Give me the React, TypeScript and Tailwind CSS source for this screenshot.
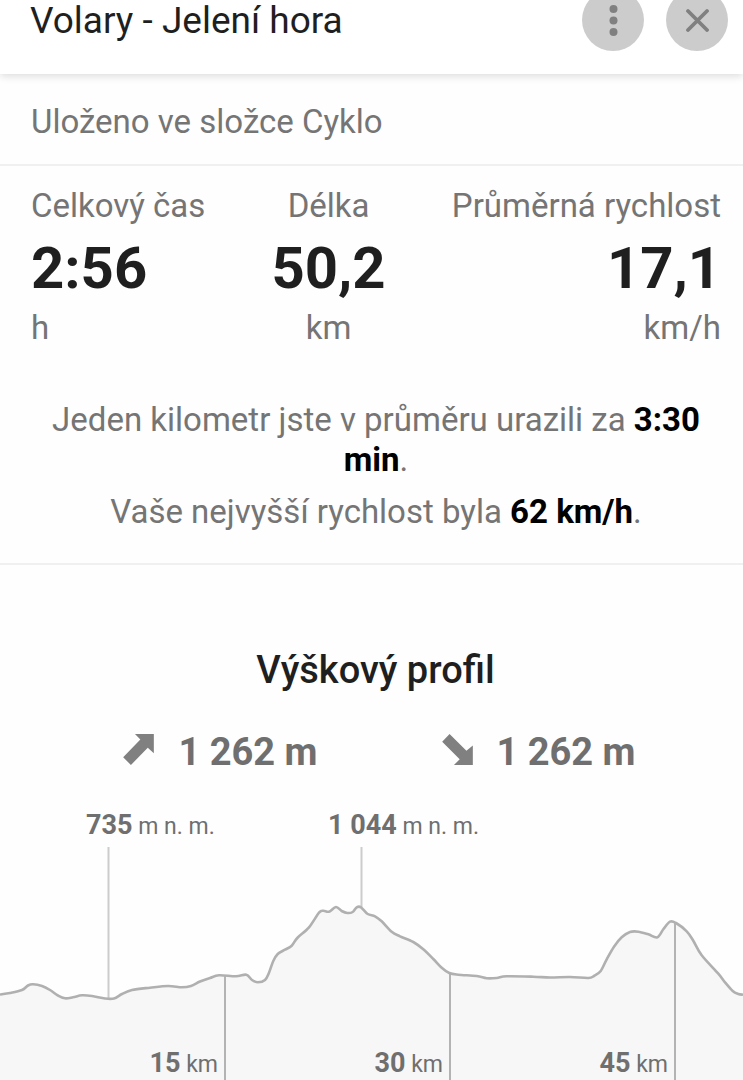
import React from 'react';

const stats = [
  { label: 'Celkový čas', value: '2:56', unit: 'h', align: 'text-left' },
  { label: 'Délka', value: '50,2', unit: 'km', align: 'text-center' },
  { label: 'Průměrná rychlost', value: '17,1', unit: 'km/h', align: 'text-right' },
];

// x, y of the terrain line in chart units
const terrain: [number, number][] = [
  [0, 194.5], [10, 193], [22, 190], [28, 185.5], [33, 184.3], [42, 186], [50, 190], [58, 195.5], [65, 198.3],
  [73, 197.3], [82, 195.3], [92, 196], [105, 198.5], [114, 198.5], [122, 194], [132, 190], [150, 187.7],
  [168, 186], [182, 187.3], [191, 186], [200, 181.5], [210, 178], [219, 175.3], [236, 176.3], [246.3, 174.7],
  [252, 180], [258, 182.3], [265, 180], [269, 172.7], [273.3, 161], [277.7, 154], [285, 149.7], [291.7, 145.7],
  [297.3, 138], [309, 127.3], [319, 112.7], [323.3, 110.7], [329, 111.7], [336, 107], [341.7, 111], [347.3, 113],
  [352.7, 112], [356.7, 107.3], [361, 107.3], [367.7, 114], [375, 116.3], [381.7, 121.3], [391.7, 131.7],
  [400, 136.3], [413.3, 142], [423.3, 149.3], [433.3, 159], [441.7, 167.7], [449.3, 173], [458.3, 174.7],
  [476.7, 176], [486.7, 178.3], [496.7, 178], [506.7, 176.3], [533.3, 176.7], [550, 177.5], [570, 177],
  [588.3, 178], [594, 176], [600.7, 171], [606.7, 159.3], [614, 146.7], [621.7, 137.3], [630, 132],
  [638.3, 131.7], [648.3, 134.3], [657.3, 137.3], [663.3, 129.3], [670, 121.7], [676, 123], [686.7, 131.3],
  [693.3, 140.7], [701.7, 155.3], [718.3, 173.7], [725, 182.3], [732.7, 191], [738.3, 194], [743, 194.7],
];

const peaks = [
  { x: 108, labelX: 86, bottom: 198, value: '735' },
  { x: 361, labelX: 328, bottom: 107, value: '1 044' },
];

const distances = [
  { x: 225, top: 176, km: 15 },
  { x: 450, top: 173, km: 30 },
  { x: 675, top: 122, km: 45 },
];

function smoothLine(points: [number, number][]) {
  let d = `M${points[0][0]} ${points[0][1]}`;
  for (let i = 0; i < points.length - 1; i++) {
    const a = points[Math.max(i - 1, 0)];
    const b = points[i];
    const c = points[i + 1];
    const e = points[Math.min(i + 2, points.length - 1)];
    d += ` C${b[0] + (c[0] - a[0]) / 6} ${b[1] + (c[1] - a[1]) / 6} ${c[0] - (e[0] - b[0]) / 6} ${c[1] - (e[1] - b[1]) / 6} ${c[0]} ${c[1]}`;
  }
  return d;
}

function ElevationChart() {
  const line = smoothLine(terrain);

  return (
    <svg viewBox="0 0 743 280" className="block w-full" role="img" aria-label="Výškový profil trasy">
      <path d={`${line} V280 H0 Z`} fill="#f7f7f7" />
      {peaks.map((p) => (
        <g key={p.value}>
          <line x1={p.x + 0.5} x2={p.x + 0.5} y1="47" y2={p.bottom} stroke="#cccccc" strokeWidth="2" />
          <text x={p.labelX} y="34" fill="#6f6f6f" fontSize="27" fontWeight="700">
            {p.value}<tspan fontSize="23" fontWeight="400"> m n. m.</tspan>
          </text>
        </g>
      ))}
      {distances.map((t) => (
        <g key={t.km}>
          <line x1={t.x} x2={t.x} y1={t.top} y2="280" stroke="#b3b3b3" strokeWidth="2" />
          <text x={t.x - 7} y="272" textAnchor="end" fill="#6f6f6f" fontSize="27" fontWeight="700">
            {t.km}<tspan fontSize="23" fontWeight="400"> km</tspan>
          </text>
        </g>
      ))}
      <path d={line} fill="none" stroke="#b0b0b0" strokeWidth="2.6" strokeLinejoin="round" />
    </svg>
  );
}

function Header() {
  return (
    <header className="relative -mt-[11px] flex h-[85px] items-start bg-white pr-[15px] pl-[30px] shadow-[0_2px_8px_rgba(0,0,0,0.14)]">
      <h1 className="flex-1 pt-[10px] text-[37px] leading-[44px] text-[#1f1f1f]">Volary - Jelení hora</h1>
      <div className="flex gap-[22px]">
        <button type="button" aria-label="Další možnosti" className="flex size-[62px] items-center justify-center rounded-full bg-[#cccccc] text-[#808080]">
          <svg width="32" height="32" viewBox="0 0 32 32" fill="currentColor"><circle cx="16.5" cy="5" r="4"/><circle cx="16.5" cy="16.5" r="4"/><circle cx="16.5" cy="28" r="4"/></svg>
        </button>
        <button type="button" aria-label="Zavřít" className="flex size-[62px] items-center justify-center rounded-full bg-[#cccccc] text-[#808080]">
          <svg width="24" height="24" viewBox="0 0 24 24" fill="none" stroke="currentColor" strokeWidth="3.8" strokeLinecap="round"><path d="M3 3l19 19M22 3l-19 19"/></svg>
        </button>
      </div>
    </header>
  );
}

export default function App() {
  return (
    <div className="overflow-hidden bg-[#fefefe] font-[Roboto,sans-serif] text-[33px] leading-[40px] text-[#757575]">
      <Header />

      <p className="border-b-2 border-[#f0f0f0] pt-7 pr-[22px] pb-[22px] pl-[31px]">Uloženo ve složce Cyklo</p>

      <section className="border-b-2 border-[#f0f0f0] pt-5 pr-[22px] pb-[31px] pl-[31px]">
        <dl className="flex justify-between">
          {stats.map((s) => (
            <div key={s.label} className={s.align}>
              <dt>{s.label}</dt>
              <dd>
                <strong className="mt-2 block text-[58px] leading-[68px] font-bold text-[#1f1f1f]">{s.value}</strong>
                <span className="mt-[6px] block">{s.unit}</span>
              </dd>
            </div>
          ))}
        </dl>
        <div className="mt-[52px] space-y-3 text-center">
          <p>
            Jeden kilometr jste v průměru urazili za <strong className="font-bold text-black">3:30 min</strong>.
          </p>
          <p>
            Vaše nejvyšší rychlost byla <strong className="font-bold text-black">62 km/h</strong>.
          </p>
        </div>
      </section>

      <section className="pt-[83px]">
        <h2 className="pr-[22px] pl-[30px] text-center text-[38px] leading-[44px] font-medium text-[#1f1f1f]">Výškový profil</h2>
        <div className="mt-[38px] mb-[26px] flex justify-center gap-[124px] pl-4 text-[38px] leading-[44px] font-bold text-[#6f6f6f]">
          <div className="flex gap-6">
            <svg width="31" height="31" viewBox="0 0 91 92" fill="#808080" className="mt-1"><path d="M35 0H91V57L73 41L23 92L0 69L51 16Z"/></svg>
            <span>1 262 m</span>
          </div>
          <div className="flex gap-6">
            <svg width="31" height="31" viewBox="0 0 91 92" fill="#808080" className="mt-1"><path d="M22 0L72 50L91 34V92H35L52 75L0 23Z"/></svg>
            <span>1 262 m</span>
          </div>
        </div>
        <ElevationChart />
      </section>
    </div>
  );
}
